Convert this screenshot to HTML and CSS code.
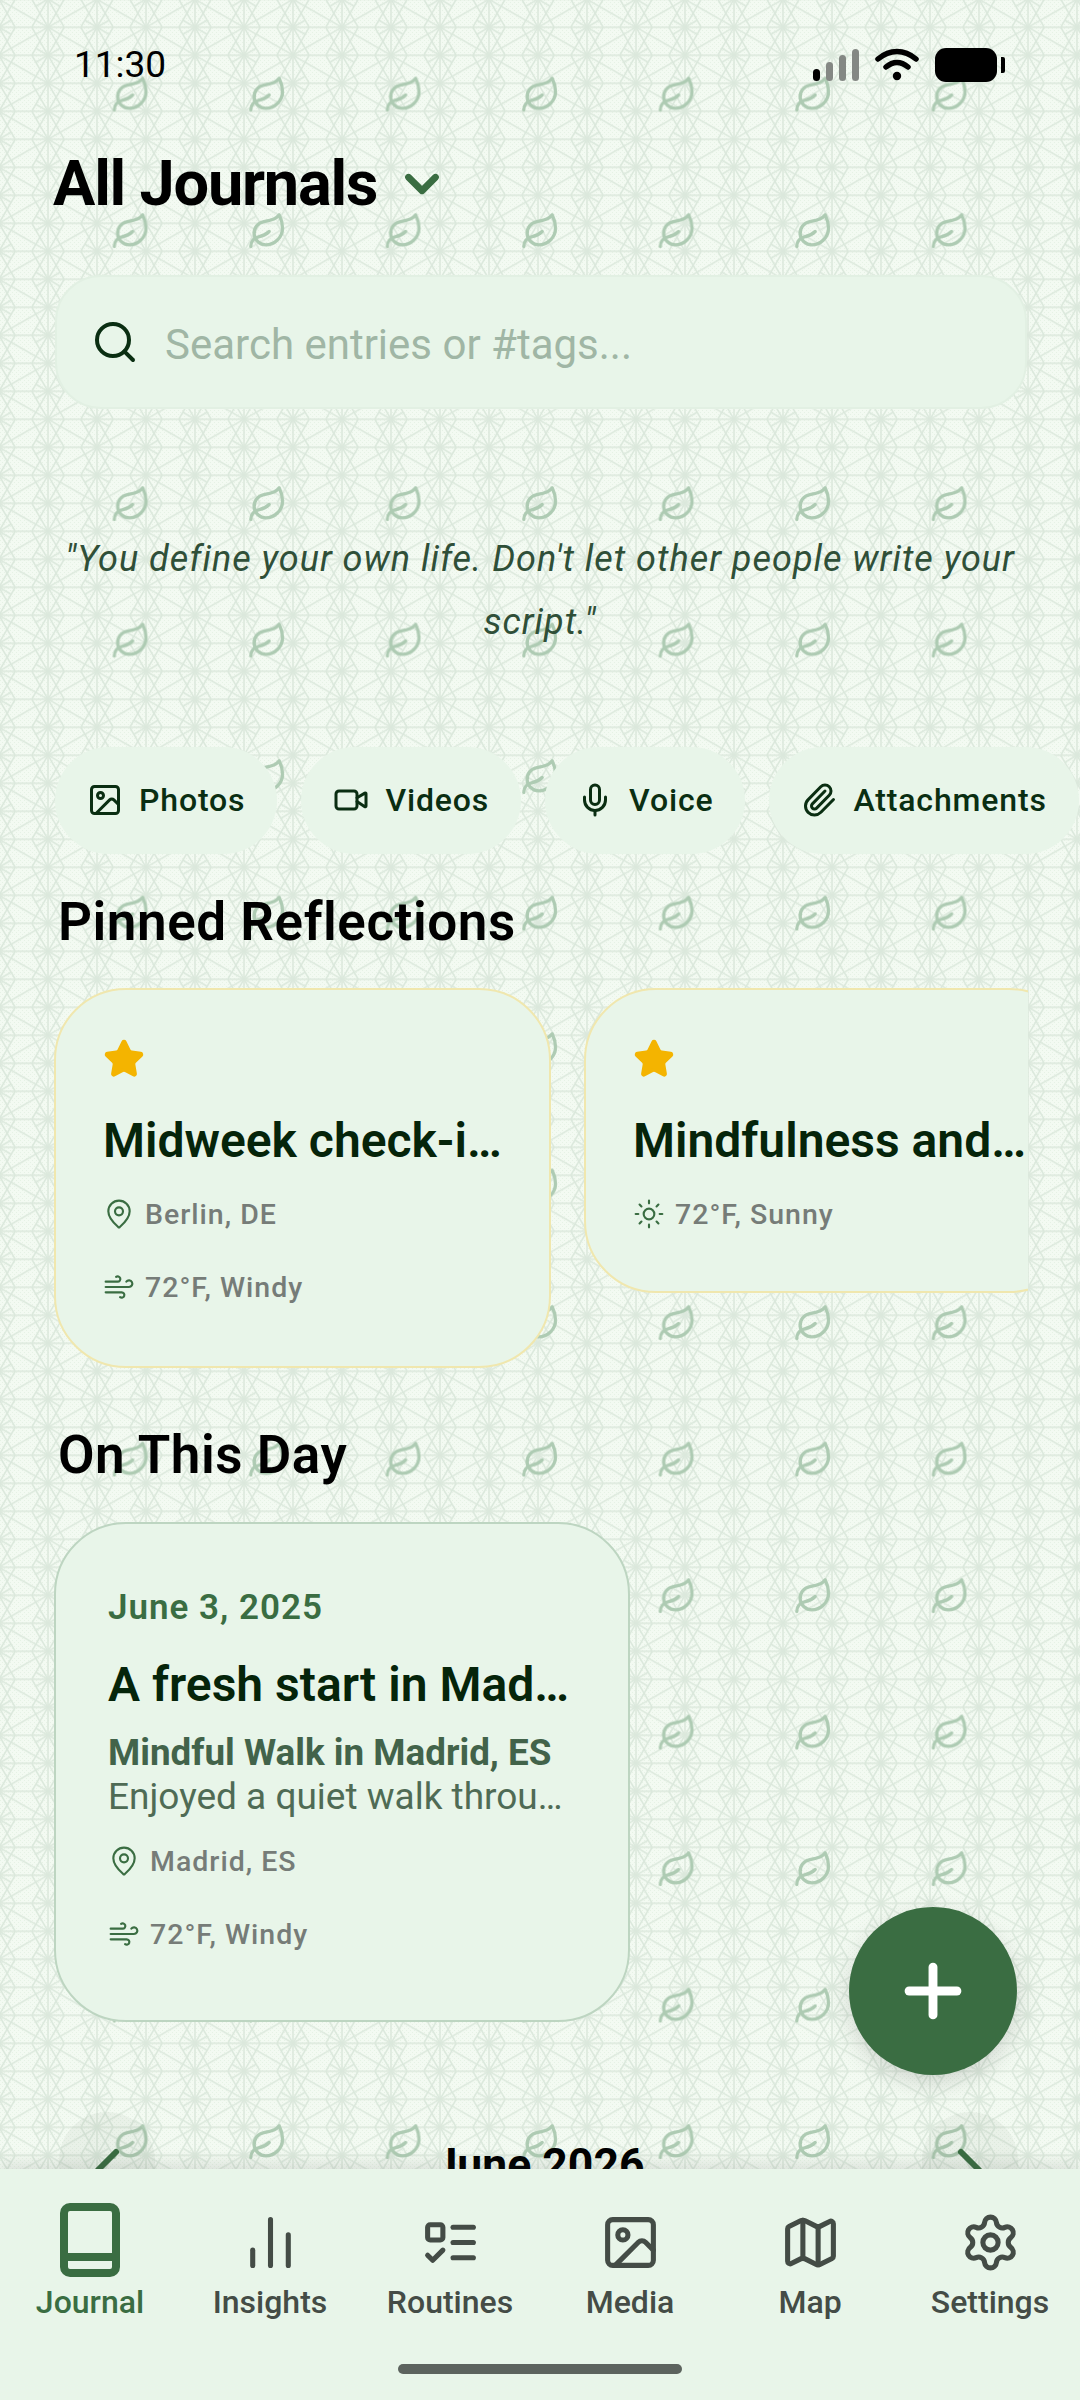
FILE: index.html
```html
<!DOCTYPE html>
<html lang="en">
<head>
<meta charset="utf-8">
<title>All Journals</title>
<link rel="stylesheet" href="styles.css">
</head>
<body>
<div class="screen">
  <svg class="backdrop" width="1080" height="2400" aria-hidden="true">
    <defs>
      <pattern id="grain" width="4" height="4" patternUnits="userSpaceOnUse">
        <rect x="0" y="0" width="1" height="1" fill="#e6f2e5"/>
        <rect x="2" y="2" width="1" height="1" fill="#e6f2e5"/>
      </pattern>
      <pattern id="lattice" x="48" y="27.3" width="98" height="56" patternUnits="userSpaceOnUse">
        <g class="lattice-lines">
          <path d="M0 0V56M49 0V56M98 0V56M0 0H98M0 28H98M0 56H98"/>
          <path d="M0 0L16.2 28M49 0L32.8 28M0 28L16.2 0M49 28L32.8 0"/>
          <path d="M49 0L65.2 28M98 0L81.8 28M49 28L65.2 0M98 28L81.8 0"/>
          <path d="M0 28L16.2 56M49 28L32.8 56M0 56L16.2 28M49 56L32.8 28"/>
          <path d="M49 28L65.2 56M98 28L81.8 56M49 56L65.2 28M98 56L81.8 28"/>
          <path d="M0 0L49 28L98 0M0 56L49 28L98 56"/>
          <path d="M49 0L36.9 7M0 28L12.1 21M49 0L61.1 7M98 28L85.9 21"/>
          <path d="M0 28L12.1 35M49 56L36.9 49M98 28L85.9 35M49 56L61.1 49"/>
        </g>
      </pattern>
      <pattern id="leaves" x="62.75" y="26.75" width="136.5" height="136.5" patternUnits="userSpaceOnUse">
        <svg class="leaf" x="48.25" y="48.25" width="40" height="40" viewBox="0 0 24 24">
          <path d="M11 20A7 7 0 0 1 9.8 6.1C15.5 5 17 4.48 19 2c1 2 2 4.18 2 8 0 5.5-4.78 10-10 10Z"/>
          <path d="M2 21c0-3 1.85-5.36 5.08-6C9.5 14.52 12 13 13 12"/>
        </svg>
      </pattern>
    </defs>
    <rect class="base" width="1080" height="2400"/>
    <rect width="1080" height="2400" fill="url(#grain)"/>
    <rect width="1080" height="2400" fill="url(#lattice)"/>
    <rect x="62.75" width="955.5" height="2400" fill="url(#leaves)"/>
  </svg>

  <main class="content">
    <header class="status">
      <span class="time">11:30</span>
      <div class="status-icons">
        <div class="signal">
          <i class="bar bar-1"></i><i class="bar bar-2"></i><i class="bar bar-3"></i><i class="bar bar-4"></i>
        </div>
        <svg class="wifi" width="44" height="34" viewBox="0 0 44 34">
          <path class="wifi-arc" d="M3 11C15 1 29 1 41 11"/>
          <path class="wifi-arc" d="M11 19C18 13 26 13 33 19"/>
          <circle cx="22" cy="28" r="4.2"/>
        </svg>
        <div class="battery"><i class="battery-body"></i><i class="battery-tip"></i></div>
      </div>
    </header>

    <div class="title-row">
      <h1 class="title">All Journals</h1>
      <svg class="icon chevron-down" viewBox="0 0 24 24"><path d="m6 9 6 6 6-6"/></svg>
    </div>

    <div class="search">
      <svg class="icon search-icon" viewBox="0 0 24 24"><path d="m21 21-4.34-4.34"/><circle cx="11" cy="11" r="8"/></svg>
      <span class="placeholder">Search entries or #tags...</span>
    </div>

    <p class="quote">"You define your own life. Don't let other people write your script."</p>

    <div class="chips">
      <div class="chip">
        <svg class="icon chip-icon" viewBox="0 0 24 24"><rect x="3" y="3" width="18" height="18" rx="2"/><circle cx="9" cy="9" r="2"/><path d="m21 15-3.086-3.086a2 2 0 0 0-2.828 0L6 21"/></svg>
        <span>Photos</span>
      </div>
      <div class="chip">
        <svg class="icon chip-icon" viewBox="0 0 24 24"><path d="m16 13 5.223 3.482a.5.5 0 0 0 .777-.416V7.87a.5.5 0 0 0-.752-.432L16 10.5"/><rect x="2" y="6" width="14" height="12" rx="2"/></svg>
        <span>Videos</span>
      </div>
      <div class="chip">
        <svg class="icon chip-icon" viewBox="0 0 24 24"><path d="M12 19v3"/><path d="M19 10v2a7 7 0 0 1-14 0v-2"/><rect x="9" y="2" width="6" height="13" rx="3"/></svg>
        <span>Voice</span>
      </div>
      <div class="chip">
        <svg class="icon chip-icon" viewBox="0 0 24 24"><path d="m16 6-8.414 8.586a2 2 0 0 0 2.829 2.829l8.414-8.586a4 4 0 1 0-5.657-5.657l-8.379 8.551a6 6 0 1 0 8.485 8.485l8.379-8.551"/></svg>
        <span>Attachments</span>
      </div>
    </div>

    <h2 class="section-title pinned-title">Pinned Reflections</h2>

    <div class="pinned">
      <article class="pin-card">
        <svg class="star" viewBox="0 0 24 24"><path d="M11.525 2.295a.53.53 0 0 1 .95 0l2.31 4.679a2.123 2.123 0 0 0 1.595 1.16l5.166.756a.53.53 0 0 1 .294.904l-3.736 3.638a2.123 2.123 0 0 0-.611 1.878l.882 5.14a.53.53 0 0 1-.771.56l-4.618-2.428a2.122 2.122 0 0 0-1.973 0L6.396 21.01a.53.53 0 0 1-.77-.56l.881-5.139a2.122 2.122 0 0 0-.611-1.879L2.16 9.795a.53.53 0 0 1 .294-.906l5.165-.755a2.122 2.122 0 0 0 1.597-1.16z"/></svg>
        <h3 class="card-title">Midweek check-i…</h3>
        <div class="meta">
          <svg class="icon meta-icon" viewBox="0 0 24 24"><path d="M20 10c0 4.993-5.539 10.193-7.399 11.799a1 1 0 0 1-1.202 0C9.539 20.193 4 14.993 4 10a8 8 0 0 1 16 0"/><circle cx="12" cy="10" r="3"/></svg>
          <span>Berlin, DE</span>
        </div>
        <div class="meta meta-next">
          <svg class="icon meta-icon" viewBox="0 0 24 24"><path d="M12.8 19.6A2 2 0 1 0 14 16H2"/><path d="M17.5 8a2.5 2.5 0 1 1 2 4H2"/><path d="M9.8 4.4A2 2 0 1 1 11 8H2"/></svg>
          <span>72°F, Windy</span>
        </div>
      </article>
      <article class="pin-card">
        <svg class="star" viewBox="0 0 24 24"><path d="M11.525 2.295a.53.53 0 0 1 .95 0l2.31 4.679a2.123 2.123 0 0 0 1.595 1.16l5.166.756a.53.53 0 0 1 .294.904l-3.736 3.638a2.123 2.123 0 0 0-.611 1.878l.882 5.14a.53.53 0 0 1-.771.56l-4.618-2.428a2.122 2.122 0 0 0-1.973 0L6.396 21.01a.53.53 0 0 1-.77-.56l.881-5.139a2.122 2.122 0 0 0-.611-1.879L2.16 9.795a.53.53 0 0 1 .294-.906l5.165-.755a2.122 2.122 0 0 0 1.597-1.16z"/></svg>
        <h3 class="card-title">Mindfulness and…</h3>
        <div class="meta">
          <svg class="icon meta-icon" viewBox="0 0 24 24"><circle cx="12" cy="12" r="4"/><path d="M12 2v2"/><path d="M12 20v2"/><path d="m4.93 4.93 1.41 1.41"/><path d="m17.66 17.66 1.41 1.41"/><path d="M2 12h2"/><path d="M20 12h2"/><path d="m6.34 17.66-1.41 1.41"/><path d="m19.07 4.93-1.41 1.41"/></svg>
          <span>72°F, Sunny</span>
        </div>
      </article>
    </div>

    <h2 class="section-title day-title">On This Day</h2>

    <article class="day-card">
      <div class="day-date">June 3, 2025</div>
      <h3 class="card-title day-card-title">A fresh start in Mad…</h3>
      <div class="day-sub">Mindful Walk in Madrid, ES</div>
      <div class="day-body">Enjoyed a quiet walk throu…</div>
      <div class="meta day-meta">
        <svg class="icon meta-icon" viewBox="0 0 24 24"><path d="M20 10c0 4.993-5.539 10.193-7.399 11.799a1 1 0 0 1-1.202 0C9.539 20.193 4 14.993 4 10a8 8 0 0 1 16 0"/><circle cx="12" cy="10" r="3"/></svg>
        <span>Madrid, ES</span>
      </div>
      <div class="meta meta-next">
        <svg class="icon meta-icon" viewBox="0 0 24 24"><path d="M12.8 19.6A2 2 0 1 0 14 16H2"/><path d="M17.5 8a2.5 2.5 0 1 1 2 4H2"/><path d="M9.8 4.4A2 2 0 1 1 11 8H2"/></svg>
        <span>72°F, Windy</span>
      </div>
    </article>

    <div class="calendar-head">
      <div class="cal-btn"><svg class="icon cal-chevron" viewBox="0 0 24 24"><path d="m15 18-6-6 6-6"/></svg></div>
      <div class="cal-month">June 2026</div>
      <div class="cal-btn"><svg class="icon cal-chevron" viewBox="0 0 24 24"><path d="m9 18 6-6-6-6"/></svg></div>
    </div>
  </main>

  <button class="fab" type="button" aria-label="New entry">
    <svg class="icon fab-icon" viewBox="0 0 24 24"><path d="M5 12h14"/><path d="M12 5v14"/></svg>
  </button>

  <nav class="nav">
    <div class="nav-items">
      <div class="nav-item active">
        <svg class="book" width="60" height="74" viewBox="0 0 60 74"><rect x="4" y="4" width="52" height="66" rx="6"/><path d="M4 54H56"/></svg>
        <span>Journal</span>
      </div>
      <div class="nav-item">
        <svg class="icon nav-icon" viewBox="0 0 24 24"><path d="M5 21v-6"/><path d="M12 21V3"/><path d="M19 21V9"/></svg>
        <span>Insights</span>
      </div>
      <div class="nav-item">
        <svg class="icon nav-icon" viewBox="0 0 24 24"><rect x="3" y="5" width="6" height="6" rx="1"/><path d="m3 17 2 2 4-4"/><path d="M13 6h8"/><path d="M13 12h8"/><path d="M13 18h8"/></svg>
        <span>Routines</span>
      </div>
      <div class="nav-item">
        <svg class="icon nav-icon" viewBox="0 0 24 24"><rect x="3" y="3" width="18" height="18" rx="2"/><circle cx="9" cy="9" r="2"/><path d="m21 15-3.086-3.086a2 2 0 0 0-2.828 0L6 21"/></svg>
        <span>Media</span>
      </div>
      <div class="nav-item">
        <svg class="icon nav-icon" viewBox="0 0 24 24"><path d="M14.106 5.553a2 2 0 0 0 1.788 0l3.659-1.83A1 1 0 0 1 21 4.619v12.764a1 1 0 0 1-.553.894l-4.553 2.277a2 2 0 0 1-1.788 0l-4.212-2.106a2 2 0 0 0-1.788 0l-3.659 1.83A1 1 0 0 1 3 19.381V6.618a1 1 0 0 1 .553-.894l4.553-2.277a2 2 0 0 1 1.788 0z"/><path d="M15 5.764v15"/><path d="M9 3.236v15"/></svg>
        <span>Map</span>
      </div>
      <div class="nav-item">
        <svg class="icon nav-icon" viewBox="0 0 24 24"><path d="M9.671 4.136a2.34 2.34 0 0 1 4.659 0 2.34 2.34 0 0 0 3.319 1.915 2.34 2.34 0 0 1 2.33 4.033 2.34 2.34 0 0 0 0 3.831 2.34 2.34 0 0 1-2.33 4.033 2.34 2.34 0 0 0-3.319 1.915 2.34 2.34 0 0 1-4.659 0 2.34 2.34 0 0 0-3.32-1.915 2.34 2.34 0 0 1-2.33-4.033 2.34 2.34 0 0 0 0-3.831A2.34 2.34 0 0 1 6.35 6.051a2.34 2.34 0 0 0 3.319-1.915"/><circle cx="12" cy="12" r="3"/></svg>
        <span>Settings</span>
      </div>
    </div>
    <div class="home-indicator"></div>
  </nav>
</div>
</body>
</html>
```

FILE: styles.css
```css
* { box-sizing: border-box; }

html, body {
  margin: 0;
  padding: 0;
}

body {
  font-family: Roboto, "Noto Sans", sans-serif;
  color: #000;
}

.screen {
  position: relative;
  width: 1080px;
  height: 2400px;
  overflow: hidden;
}

.backdrop {
  position: absolute;
  inset: 0;
}

.base { fill: #f3faf2; }

.lattice-lines path {
  fill: none;
  stroke: #dbe8dc;
  stroke-width: 1.5;
}

.leaf path {
  fill: none;
  stroke: #aecbb3;
  stroke-width: 2;
  stroke-linecap: round;
  stroke-linejoin: round;
}

.content {
  position: relative;
  display: flex;
  flex-direction: column;
}

.icon {
  fill: none;
  stroke: currentColor;
  stroke-width: 2;
  stroke-linecap: round;
  stroke-linejoin: round;
  flex: none;
}

/* status bar */
.status {
  height: 130px;
  padding: 0 75px 0 74px;
  display: flex;
  justify-content: space-between;
  align-items: center;
}

.time {
  font-size: 37px;
  line-height: 40px;
  color: #000;
}

.status-icons {
  display: flex;
  align-items: center;
  gap: 16px;
}

.signal {
  display: flex;
  align-items: flex-end;
  gap: 6px;
  height: 32px;
}

.bar {
  display: block;
  width: 7px;
  border-radius: 4px;
  background: #848884;
}

.bar-1 { height: 12px; background: #000; }
.bar-2 { height: 19px; }
.bar-3 { height: 26px; }
.bar-4 { height: 32px; }

.wifi-arc {
  fill: none;
  stroke: #000;
  stroke-width: 5.5;
  stroke-linecap: round;
}

.battery {
  display: flex;
  align-items: center;
  gap: 4px;
}

.battery-body {
  display: block;
  width: 62px;
  height: 34px;
  border-radius: 11px;
  background: #000;
}

.battery-tip {
  display: block;
  width: 4px;
  height: 16px;
  border-radius: 0 2px 2px 0;
  background: #000;
}

/* title */
.title-row {
  height: 108px;
  padding-left: 53px;
  display: flex;
  align-items: center;
}

.title {
  margin: 0;
  font-size: 63px;
  font-weight: 700;
  letter-spacing: -1.2px;
  line-height: 72px;
}

.chevron-down {
  width: 54px;
  height: 54px;
  margin-left: 18px;
  color: #3a6d42;
  stroke-width: 3;
}

/* search */
.search {
  margin: 37px 53px 0 55px;
  height: 134px;
  padding-left: 34px;
  display: flex;
  align-items: center;
  gap: 26px;
  background: #e8f5e9;
  border: 2px solid #e2f0e3;
  border-radius: 46px;
}

.search-icon {
  width: 48px;
  height: 48px;
  color: #0a2e12;
}

.placeholder {
  padding-top: 5px;
  font-size: 42px;
  color: #a0b6a5;
}

/* quote */
.quote {
  margin: 119px 40px 0;
  font-size: 36px;
  font-style: italic;
  line-height: 63px;
  letter-spacing: 1px;
  text-align: center;
  color: #2f4f38;
}

/* chips */
.chips {
  margin: 93px 0 0 55px;
  display: flex;
  gap: 24px;
  width: 1100px;
}

.chip {
  height: 107px;
  padding: 0 32px 2px;
  display: flex;
  align-items: center;
  gap: 16px;
  flex: none;
  border-radius: 54px;
  background: #e8f5e9;
  font-size: 32px;
  font-weight: 500;
  letter-spacing: 0.85px;
  color: #0a2e12;
}

.chip-icon {
  width: 36px;
  height: 36px;
}

/* section titles */
.section-title {
  margin: 0 0 0 58px;
  font-size: 53px;
  font-weight: 600;
  line-height: 60px;
  letter-spacing: 0.55px;
  color: #000;
}

.pinned-title { margin-top: 38px; }
.day-title { margin-top: 57px; }

/* pinned */
.pinned {
  margin: 36px 52px 0 54px;
  display: flex;
  align-items: flex-start;
  gap: 33px;
  overflow: hidden;
}

.pin-card {
  width: 497px;
  flex: none;
  padding: 48px 0 0 47px;
  background: #e8f5e9;
  border: 2.5px solid #f0e7ae;
  border-radius: 72px;
}

.pin-card:first-child { height: 380px; }
.pin-card:last-child { height: 305px; }

.star {
  display: block;
  width: 42px;
  height: 42px;
  fill: #f4b400;
  stroke: #f4b400;
  stroke-width: 2;
  stroke-linejoin: round;
}

.card-title {
  margin: 33px 0 0;
  font-size: 48px;
  font-weight: 600;
  line-height: 56px;
  color: #05240a;
  white-space: nowrap;
}

.meta {
  display: flex;
  align-items: center;
  gap: 10px;
  height: 40px;
  margin-top: 25px;
  font-size: 28.5px;
  font-weight: 500;
  letter-spacing: 1px;
  color: #767c78;
}

.meta-next { margin-top: 33px; }

.meta-icon {
  width: 32px;
  height: 32px;
  color: #3a6d42;
  stroke-width: 1.6;
}

/* on this day */
.day-card {
  margin: 37px 0 0 54px;
  width: 576px;
  height: 500px;
  padding: 63px 0 0 52px;
  background: #e8f5e9;
  border: 2.5px solid #bdd5c1;
  border-radius: 72px;
}

.day-date {
  font-size: 35px;
  font-weight: 600;
  line-height: 42px;
  letter-spacing: 1px;
  color: #3a6d42;
}

.day-card-title { margin-top: 28px; }

.day-sub {
  margin-top: 19px;
  font-size: 36.8px;
  font-weight: 700;
  line-height: 42px;
  color: #42634a;
}

.day-body {
  margin-top: 2px;
  font-size: 37px;
  line-height: 42px;
  color: #4f6b55;
}

.day-meta { margin-top: 23px; }

/* calendar header */
.calendar-head {
  margin: 90px 62px 0 59px;
  display: flex;
  justify-content: space-between;
}

.cal-btn {
  width: 96px;
  height: 116px;
  display: flex;
  align-items: center;
  justify-content: center;
  border-radius: 48px;
  background: rgba(58, 80, 62, 0.05);
}

.cal-chevron {
  width: 72px;
  height: 72px;
  color: #3a6d42;
}

.cal-month {
  padding-top: 28px;
  font-size: 44.5px;
  font-weight: 700;
  line-height: 50px;
  color: #000;
}

/* FAB */
.fab {
  position: absolute;
  left: 849px;
  top: 1907px;
  width: 168px;
  height: 168px;
  padding: 0;
  display: flex;
  align-items: center;
  justify-content: center;
  border: 0;
  border-radius: 50%;
  background: #3a6d42;
  box-shadow: 0 8px 24px rgba(0, 0, 0, 0.14);
}

.fab-icon {
  width: 82px;
  height: 82px;
  color: #fff;
  stroke-width: 2.6;
}

/* bottom nav */
.nav {
  position: absolute;
  left: 0;
  right: 0;
  bottom: 0;
  height: 231px;
  padding-top: 34px;
  display: flex;
  flex-direction: column;
  align-items: center;
  background: #e8f5e9;
  box-shadow: 0 -6px 14px rgba(60, 70, 60, 0.13);
}

.nav-items {
  width: 100%;
  display: grid;
  grid-template-columns: repeat(6, 180px);
}

.nav-item {
  display: flex;
  flex-direction: column;
  align-items: center;
  font-size: 32px;
  font-weight: 500;
  line-height: 38px;
  color: #444c46;
}

.nav-item.active { color: #3a6d42; }

.nav-icon {
  width: 61px;
  height: 61px;
  margin: 9px 0 10px;
}

.book {
  margin: 0 0 6px;
  fill: none;
  stroke: #3a6d42;
  stroke-width: 8;
  flex: none;
}

.home-indicator {
  width: 284px;
  height: 10px;
  margin-top: 43px;
  border-radius: 5px;
  background: #5c635e;
}
```
